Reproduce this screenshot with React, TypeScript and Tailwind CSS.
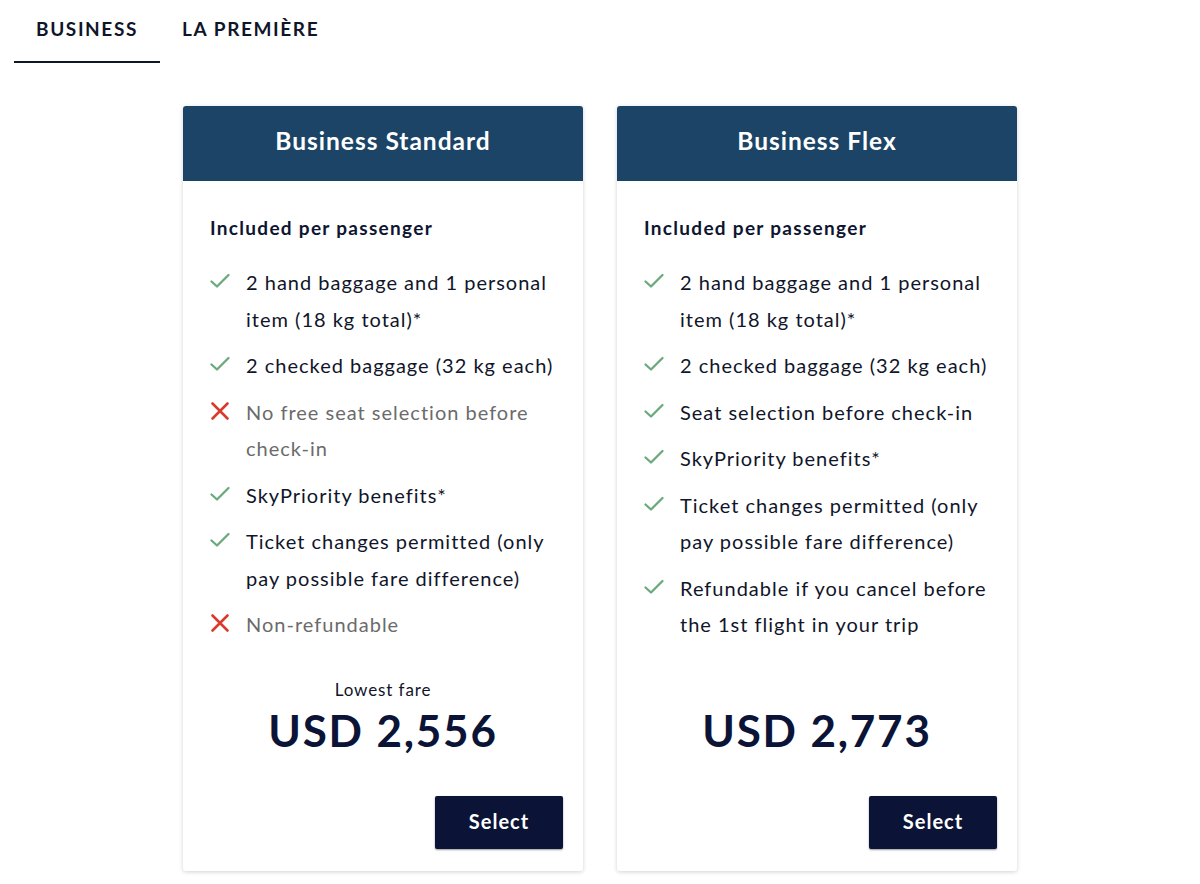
import React from 'react'

type Feature = { ok: boolean; text: string };

type Fare = {
  name: string;
  label?: string;
  price: string;
  features: Feature[];
};

const fares: Fare[] = [
  {
    name: "Business Standard",
    label: "Lowest fare",
    price: "USD 2,556",
    features: [
      { ok: true, text: "2 hand baggage and 1 personal item (18 kg total)*" },
      { ok: true, text: "2 checked baggage (32 kg each)" },
      { ok: false, text: "No free seat selection before check-in" },
      { ok: true, text: "SkyPriority benefits*" },
      { ok: true, text: "Ticket changes permitted (only pay possible fare difference)" },
      { ok: false, text: "Non-refundable" },
    ],
  },
  {
    name: "Business Flex",
    price: "USD 2,773",
    features: [
      { ok: true, text: "2 hand baggage and 1 personal item (18 kg total)*" },
      { ok: true, text: "2 checked baggage (32 kg each)" },
      { ok: true, text: "Seat selection before check-in" },
      { ok: true, text: "SkyPriority benefits*" },
      { ok: true, text: "Ticket changes permitted (only pay possible fare difference)" },
      { ok: true, text: "Refundable if you cancel before the 1st flight in your trip" },
    ],
  },
];

const CheckIcon = () => (
  <svg width="22" height="22" viewBox="0 0 22 22" fill="none">
    <path d="M2.5 11.5 L8 16.5 L19.5 5" stroke="#6aaa7c" strokeWidth="2.3" strokeLinecap="round" strokeLinejoin="round" />
  </svg>
);

const CrossIcon = () => (
  <svg width="22" height="22" viewBox="0 0 22 22" fill="none">
    <path d="M3.5 3.5 L18.5 18.5 M18.5 3.5 L3.5 18.5" stroke="#d83a2c" strokeWidth="2.6" strokeLinecap="round" />
  </svg>
);

const FareCard = ({ fare }: { fare: Fare }) => (
  <div className="w-[400px] h-[765px] bg-white rounded-[3px] shadow-[0_1px_4px_rgba(0,0,0,0.18)] flex flex-col overflow-hidden">
    {/* header */}
    <div className="h-[75px] bg-[#1b4466] flex items-center justify-center pb-[4px]">
      <h2 className="text-white text-[24.5px] font-bold tracking-[1px]">{fare.name}</h2>
    </div>

    <div className="flex-1 flex flex-col pl-[27px] pr-[20px] pt-[34px] pb-[22px]">
      <h3 className="text-[19px] font-bold text-[#0d1530] leading-[26px] tracking-[1.3px]">Included per passenger</h3>

      <ul className="mt-[23px] flex flex-col gap-[10px]">
        {fare.features.map((f) => (
          <li key={f.text} className="flex items-start">
            <span className="w-[37px] shrink-0 pt-[6px] -ml-[1px]">
              {f.ok ? <CheckIcon /> : <CrossIcon />}
            </span>
            <span
              className={
                "text-[20px] leading-[36.5px] tracking-[1px] " +
                (f.ok ? "text-[#10152a]" : "text-[#6b6b6b]")
              }
            >
              {f.text}
            </span>
          </li>
        ))}
      </ul>

      <div className="mt-auto flex flex-col items-center pr-[7px]">
        <div className="h-[24px] text-[17px] text-[#10152a] leading-[24px] tracking-[0.9px]">{fare.label}</div>
        <div className="mt-[2px] text-[44px] font-bold text-[#0b1437] leading-[52px] tracking-[1.8px]">{fare.price}</div>
      </div>

      <div className="mt-[40px] flex justify-end">
        <button className="w-[128px] h-[53px] pb-[3px] bg-[#0b1437] text-white text-[20px] font-bold tracking-[1px] rounded-[2px] shadow-[0_1px_2px_rgba(0,0,0,0.4)]">
          Select
        </button>
      </div>
    </div>
  </div>
);

const App = () => {
  return (
    <div className="w-[1200px] h-[884px] bg-white overflow-hidden font-['Lato','Open_Sans',sans-serif]">
      {/* Tabs */}
      <div className="flex pl-[14px] h-[63px]">
        <div className="w-[146px] flex flex-col items-center border-b-2 border-[#10152a]">
          <span className="mt-[15px] text-[19px] font-bold text-[#10152a] tracking-[1.6px]">BUSINESS</span>
        </div>
        <div className="px-[22px] flex flex-col">
          <span className="mt-[15px] text-[19px] font-bold text-[#10152a] tracking-[1.6px]">LA PREMIÈRE</span>
        </div>
      </div>

      {/* Cards */}
      <div className="flex justify-center gap-[34px] pt-[43px]">
        {fares.map((fare) => (
          <FareCard key={fare.name} fare={fare} />
        ))}
      </div>
    </div>
  );
};

export default App;
